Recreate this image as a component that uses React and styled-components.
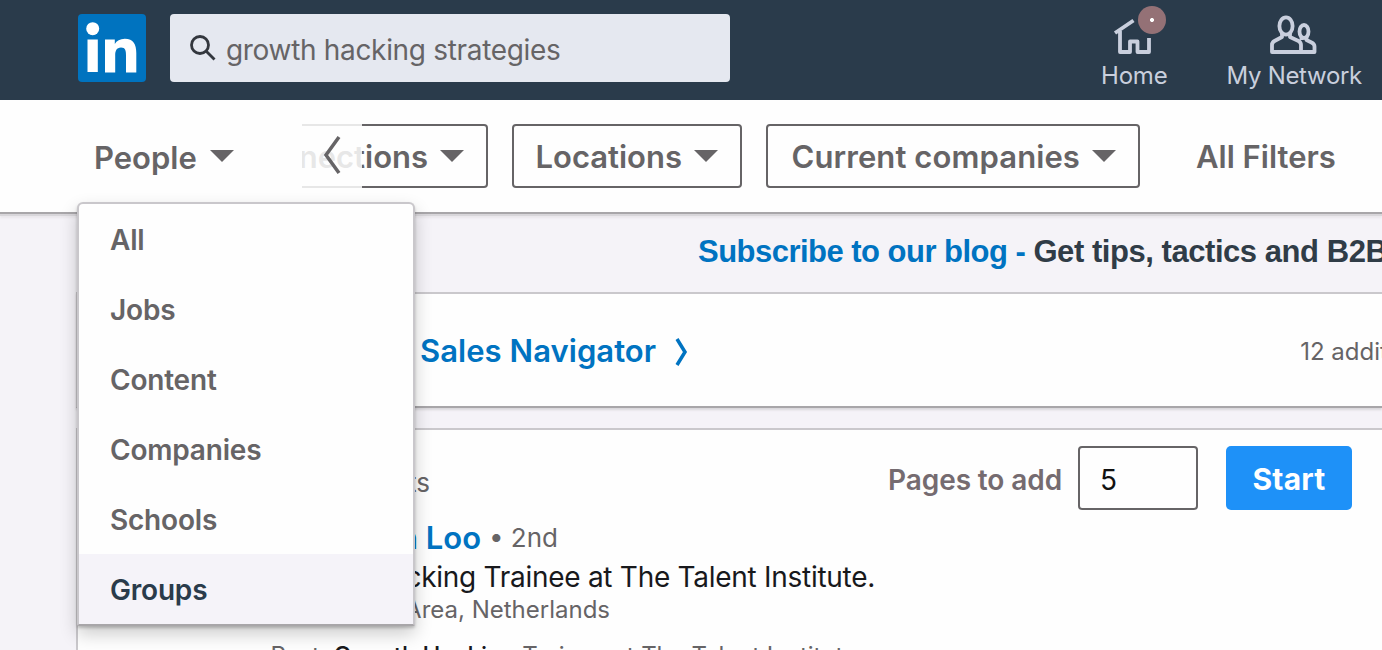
import React from 'react'
import styled, { createGlobalStyle } from 'styled-components'

const blue = '#0073c1'
const gray = '#666466'
const navy = '#2a3b4b'

const GlobalStyle = createGlobalStyle`
  * {
    box-sizing: border-box;
  }
  body {
    margin: 0;
    overflow: hidden;
    background: #f5f3f8;
    font-family: Inter, 'Liberation Sans', sans-serif;
  }
`

const Page = styled.div`
  position: relative;
  width: 1382px;
  height: 650px;
  overflow: hidden;
  background: #f5f3f8;
`

const Text = styled.span`
  color: ${p => p.color || gray};
  font-size: ${p => p.size}px;
  font-weight: ${p => p.weight || 400};
  line-height: 40px;
  letter-spacing: ${p => p.spacing || 0}px;
  white-space: pre;
  flex: none;
`

const Header = styled.header`
  display: flex;
  align-items: flex-start;
  height: 100px;
  padding: 14px 20px 0 78px;
  background: ${navy};
`

const Search = styled.div`
  display: flex;
  align-items: center;
  width: 560px;
  height: 68px;
  margin-left: 24px;
  padding: 4px 20px 0 19px;
  gap: 10px;
  border-radius: 4px;
  background: #e5e8f0;
  svg {
    margin-top: -5px;
  }
`

const Nav = styled.nav`
  display: flex;
  margin-left: auto;
  gap: 59px;
`

const NavItem = styled.div`
  position: relative;
  display: flex;
  flex-direction: column;
  align-items: center;
  svg {
    display: block;
  }
`

const Badge = styled.i`
  position: absolute;
  top: -8px;
  left: 37px;
  width: 28px;
  height: 28px;
  border-radius: 50%;
  background: radial-gradient(circle, #fff 1.7px, #947176 2.3px);
`

const FilterBar = styled.div`
  position: relative;
  z-index: 1;
  display: flex;
  align-items: center;
  height: 114px;
  padding-left: 94px;
  background: #fefefe;
  border-bottom: 2px solid #a8a6a9;
  box-shadow: 0 2px 0 #d8d6da, 0 4px 2px #e9e7eb;
`

const Trigger = styled.div`
  display: flex;
  align-items: center;
  width: 208px;
  gap: 13px;
  span {
    padding-top: 2px;
    margin-bottom: -1px;
  }
`

const Caret = styled.i`
  flex: none;
  border: 12px solid transparent;
  border-top-color: ${gray};
  border-bottom-width: 0;
`

const Filters = styled.div`
  position: relative;
  display: flex;
  gap: 24px;
  width: 838px;
  overflow: hidden;
`

const Filter = styled.div`
  display: flex;
  align-items: center;
  justify-content: flex-end;
  flex: none;
  width: ${p => p.width}px;
  height: 64px;
  padding-right: 22px;
  gap: 12px;
  border: 2px solid ${gray};
  border-radius: 4px;
  ${p => p.cut && 'border-left: 0; border-radius: 0 4px 4px 0;'}
  span {
    margin-top: 2px;
  }
`

const Fade = styled.div`
  position: absolute;
  top: 0;
  left: 0;
  display: flex;
  align-items: center;
  justify-content: center;
  width: 60px;
  height: 64px;
  background: rgba(254, 254, 254, 0.85);
`

const AllFilters = styled.div`
  margin: 2px 0 0 56px;
`

const Banner = styled.div`
  display: flex;
  align-items: center;
  height: 78px;
  padding: 0 0 2px 698px;
  font-family: 'Liberation Sans', sans-serif;
`

const Card = styled.section`
  height: ${p => p.height}px;
  margin-left: 76px;
  background: #fefefe;
  border: 2px solid #cac8cc;
  border-right: 0;
  ${p => p.raised && 'margin-bottom: 20px; border-bottom-color: #a8a6a9; box-shadow: 0 2px 2px #d8d6da;'}
`

const Navigator = styled.div`
  display: flex;
  align-items: center;
  height: 100%;
  padding: 2px 0 0 342px;
  svg {
    flex: none;
    margin: 1px 0 0 18px;
  }
`

const Extra = styled.div`
  margin: 1px 0 0 611px;
`

const Tools = styled.div`
  display: flex;
  align-items: center;
  justify-content: flex-end;
  height: 64px;
  margin: 16px 30px 0 0;
`

const Results = styled.div`
  display: flex;
  justify-content: flex-end;
  width: 352px;
  margin-right: auto;
  padding-top: 9px;
`

const Label = styled.div`
  padding-top: 4px;
`

const PageInput = styled.div`
  display: flex;
  align-items: center;
  width: 120px;
  height: 64px;
  margin: 0 28px 0 16px;
  padding: 4px 0 0 20px;
  border: 2px solid ${gray};
  border-radius: 4px;
`

const Start = styled.div`
  display: flex;
  align-items: center;
  justify-content: center;
  width: 126px;
  height: 64px;
  padding-top: 2px;
  border-radius: 5px;
  background: #1e91f8;
`

const Line = styled.div`
  display: flex;
  align-items: center;
  justify-content: flex-end;
  width: ${p => p.end - 78}px;
  height: ${p => p.height}px;
`

const Menu = styled.div`
  position: absolute;
  z-index: 2;
  top: 202px;
  left: 77px;
  width: 338px;
  height: 424px;
  background: #fefefe;
  border: 2px solid #c9c7cb;
  border-bottom: 2px solid #a8a6a9;
  border-radius: 6px 6px 2px 2px;
  box-shadow: 0 2px 3px rgba(0, 0, 0, 0.2), 0 8px 18px rgba(0, 0, 0, 0.2);
`

const MenuItem = styled.div`
  display: flex;
  align-items: center;
  height: 70px;
  padding: 1px 0 0 31px;
  background: ${p => (p.active ? '#f5f3f9' : 'transparent')};
`

const Logo = () => (
  <svg width="68" height="68" viewBox="0 0 68 68">
    <rect width="68" height="68" rx="4" fill="#0073bf" />
    <circle cx="14.7" cy="14.7" r="6.5" fill="#fff" />
    <path
      fill="#fff"
      d="M9.5 25.5h10.3V58H9.5zM27 25.5h9.8v4.5c1.8-3.200 5.200-5.300 10-5.300C55.500 24.700 58.300 30.500 58.300 39v19.500H48V41.500c0-4.500-.5-8-5-8s-5.800 3.600-5.800 7.800v17.200H27z"
    />
  </svg>
)

const HomeIcon = () => (
  <svg width="42" height="42" viewBox="0 0 42 42" fill="none" stroke="#c9cfdd" strokeWidth="3.8">
    <path d="M2 19 20.500 6.500M7 17v21h10V27.500h7.500V38H36V24" strokeLinejoin="round" />
  </svg>
)

const NetworkIcon = () => (
  <svg width="50" height="42" viewBox="0 0 50 42" fill="none" stroke="#c9cfdd" strokeWidth="3.8" strokeLinejoin="round">
    <ellipse cx="17" cy="12" rx="6.600" ry="8.600" />
    <path d="M13 19v4L5.500 27Q3 28.500 3 31v7h29v-7q0-2.500-2.500-4L21 23v-4" />
    <ellipse cx="35" cy="17.500" rx="4.500" ry="6.500" />
    <path d="M32.500 23v3M37.500 23v3l5 2.500q3 1.500 3 4V38H32" />
  </svg>
)

const filters = [
  { label: 'nnections', width: 186, cut: true },
  { label: 'Locations', width: 230 },
  { label: 'Current companies', width: 374, spacing: 0.1 }
]

const items = ['All', 'Jobs', 'Content', 'Companies', 'Schools', 'Groups']

const App = () => (
  <Page>
    <GlobalStyle />
    <Header>
      <Logo />
      <Search>
        <svg width="27" height="27" viewBox="0 0 27 27" fill="none" stroke="#33373e" strokeWidth="2.8">
          <circle cx="11" cy="11" r="8.500" />
          <path d="m17 17 8.500 8.500" />
        </svg>
        <Text size={28} spacing={-0.32}>growth hacking strategies</Text>
      </Search>
      <Nav>
        <NavItem>
          <HomeIcon />
          <Text size={24} spacing={-0.2} color="#c9cfdd">Home</Text>
          <Badge />
        </NavItem>
        <NavItem>
          <NetworkIcon />
          <Text size={24} spacing={-0.3} color="#c9cfdd">My Network</Text>
        </NavItem>
      </Nav>
    </Header>
    <FilterBar>
      <Trigger>
        <Text size={31} weight={600}>People</Text>
        <Caret />
      </Trigger>
      <Filters>
        {filters.map(({ label, width, cut, spacing }) => (
          <Filter key={label} width={width} cut={cut}>
            <Text size={31} weight={600} spacing={spacing}>{label}</Text>
            <Caret />
          </Filter>
        ))}
        <Fade>
          <svg width="20" height="42" viewBox="0 0 20 42" fill="none" stroke={gray} strokeWidth="3.500">
            <path d="M17 2 4 20l13 18" />
          </svg>
        </Fade>
      </Filters>
      <AllFilters>
        <Text size={31} weight={600}>All Filters</Text>
      </AllFilters>
    </FilterBar>
    <Banner>
      <Text size={31} weight={700} spacing={-0.52} color={blue}>Subscribe to our blog - </Text>
      <Text size={31} weight={700} spacing={-0.45} color="#303c47">Get tips, tactics and B2B</Text>
    </Banner>
    <Card height={116} raised>
      <Navigator>
        <Text size={31} weight={600} spacing={0.05} color={blue}>Sales Navigator</Text>
        <svg width="15" height="30" viewBox="0 0 15 30" fill="none" stroke={blue} strokeWidth="3.500">
          <path d="m3 2 8 13-8 13" />
        </svg>
        <Extra>
          <Text size={24}>12 additional</Text>
        </Extra>
      </Navigator>
    </Card>
    <Card height={260}>
      <Tools>
        <Results>
          <Text size={26}>results</Text>
        </Results>
        <Label>
          <Text size={28} weight={600} spacing={-0.1} color="#756b70">Pages to add</Text>
        </Label>
        <PageInput>
          <Text size={28} color="#111">5</Text>
        </PageInput>
        <Start>
          <Text size={30} weight={700} spacing={0.2} color="#fff">Start</Text>
        </Start>
      </Tools>
      <Line end={558} height={55}>
        <Text size={31} weight={600} color={blue}>n Loo </Text>
        <Text size={26}>• 2nd</Text>
      </Line>
      <Line end={875} height={23}>
        <Text size={28} spacing={-0.28} color="#18191c">Growth Hacking Trainee at The Talent Institute.</Text>
      </Line>
      <Line end={610} height={44}>
        <Text size={24}>Area, Netherlands</Text>
      </Line>
      <Line end={857} height={48}>
        <Text size={24}>Past: </Text>
        <Text size={24} weight={500} spacing={-0.1} color="#18191c">Growth Hacking </Text>
        <Text size={24} spacing={-0.05}>Trainee at The Talent Institute</Text>
      </Line>
    </Card>
    <Menu>
      {items.map(item => (
        <MenuItem key={item} active={item === 'Groups'}>
          <Text size={28} weight={600} spacing={-0.2} color={item === 'Groups' ? navy : gray}>
            {item}
          </Text>
        </MenuItem>
      ))}
    </Menu>
  </Page>
)

export default App
